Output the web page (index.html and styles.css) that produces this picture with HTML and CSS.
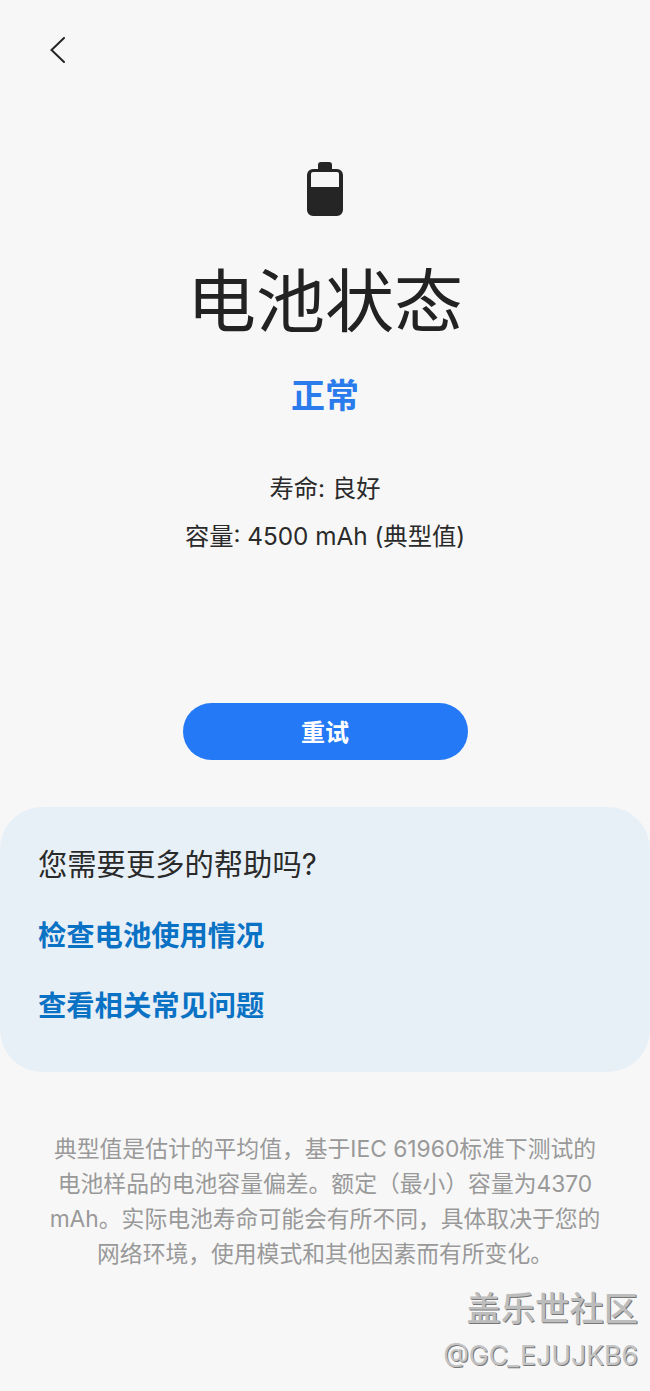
FILE: index.html
```html
<!DOCTYPE html>
<html lang="zh">
<head>
<meta charset="utf-8">
<title>电池状态</title>
<link rel="stylesheet" href="styles.css">
</head>
<body>
<div class="page">
  <header class="topbar">
    <svg class="back" width="16" height="26" viewBox="0 0 16 26"><path d="M15 1 L2.5 13 L15 25" fill="none" stroke="#252525" stroke-width="2" stroke-linecap="round" stroke-linejoin="miter"/></svg>
  </header>
  <section class="status">
    <svg class="battery" width="36" height="54" viewBox="0 0 36 54">
      <path fill="#252525" fill-rule="evenodd" d="M11 7V3a3 3 0 0 1 3-3h8a3 3 0 0 1 3 3v4h5a6 6 0 0 1 6 6v35a6 6 0 0 1-6 6H6a6 6 0 0 1-6-6V13a6 6 0 0 1 6-6ZM4 25H32V12a2 2 0 0 0-2-2H6a2 2 0 0 0-2 2Z"/>
    </svg>
    <h1 class="title">电池状态</h1>
    <div class="state">正常</div>
    <p class="line first">寿命: 良好</p>
    <p class="line">容量: 4500 mAh (典型值)</p>
    <button class="retry">重试</button>
  </section>
  <section class="help">
    <div class="help-q">您需要更多的帮助吗?</div>
    <a class="help-link">检查电池使用情况</a>
    <a class="help-link">查看相关常见问题</a>
  </section>
  <p class="note">典型值是估计的平均值，基于IEC 61960标准下测试的<br>电池样品的电池容量偏差。额定（最小）容量为4370<br>mAh。实际电池寿命可能会有所不同，具体取决于您的<br>网络环境，使用模式和其他因素而有所变化。</p>
  <div class="watermark">
    <div class="wm-top">盖乐世社区</div>
    <div class="wm-bottom">@GC_EJUJKB6</div>
  </div>
</div>
</body>
</html>
```
FILE: styles.css
```css
* { box-sizing: border-box; }
html, body { margin: 0; padding: 0; }
body {
  background: #f7f7f7;
  font-family: "Inter", "Noto Sans CJK SC", sans-serif;
  color: #252525;
}
.page { position: relative; width: 650px; height: 1391px; overflow: hidden; }
.topbar { height: 162px; padding: 37px 0 0 49px; }
.back { display: block; }
.status { display: flex; flex-direction: column; align-items: center; }
.battery { display: block; }
.title { margin: 38px 0 0; font-size: 69px; line-height: 96px; font-weight: 400; color: #222; }
.state { margin-top: 21px; font-size: 34px; line-height: 50px; font-weight: 700; color: #2a7bec; }
.line { margin: 0; font-size: 24.3px; line-height: 48px; color: #2a2a2a; }
.line.first { margin-top: 43px; }
.retry {
  margin-top: 143px;
  width: 285px; height: 57px;
  border: 0; border-radius: 29px;
  background: #2479f6; color: #fff;
  font: 700 24px/57px "Inter", "Noto Sans CJK SC", sans-serif;
}
.help {
  margin-top: 47px;
  height: 265px;
  background: #e8f0f7;
  border-radius: 42px;
  padding: 35px 38px 0;
  display: flex; flex-direction: column;
}
.help-q { font-size: 29.3px; line-height: 46px; color: #2a2a2a; }
.help-link { margin-top: 25px; font-size: 28.3px; line-height: 46px; font-weight: 700; color: #0a72c4; }
.help-link + .help-link { margin-top: 24px; }
.note {
  margin: 59px 0 0;
  font-size: 22.8px; line-height: 35px;
  text-align: center; color: #999;
}
.watermark { position: absolute; right: 12px; top: 1289px; text-align: right; }
.wm-top { font-size: 34.3px; line-height: 40px; font-weight: 500; color: #bdbdbd; text-shadow: 1px 1px 0 #777; }
.wm-bottom { font-size: 26.6px; line-height: 36px; margin-top: 8px; color: #c4c4c4; text-shadow: 1px 1px 0 #777; }
```
